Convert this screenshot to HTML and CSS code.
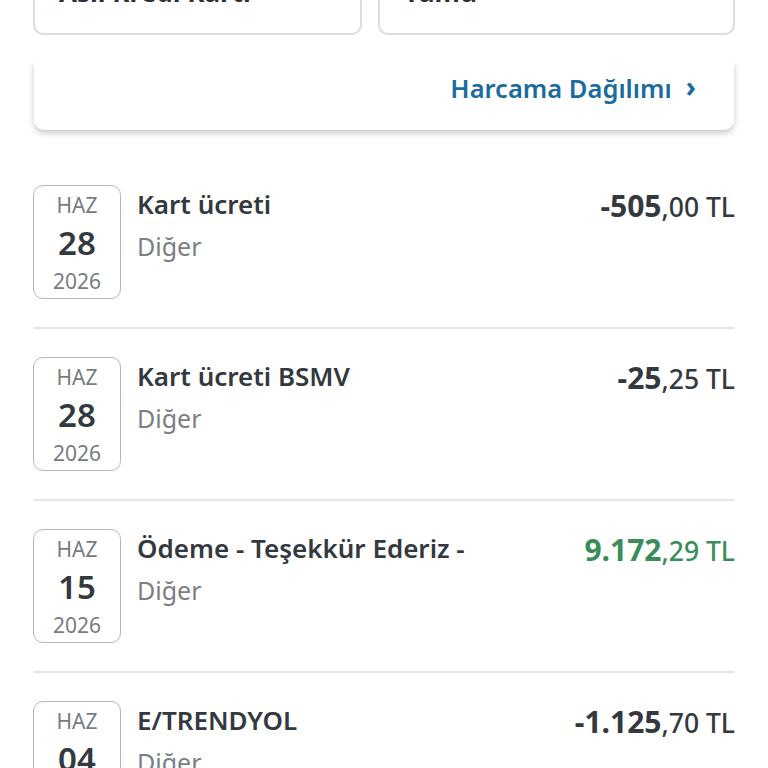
FILE: index.html
```html
<!DOCTYPE html>
<html lang="tr">
<head>
    <meta charset="UTF-8">
    <title>Kart Hareketleri</title>
    <meta name="viewport" content="width=device-width,initial-scale=1.0">
    <link rel="stylesheet" href="styles.css">
</head>
<body>
    <div class="filters">
        <div class="filter">Asıl Kredi Kartı</div>
        <div class="filter">Tümü</div>
    </div>

    <div class="summary">
        <a href="#" class="summary_link">Harcama Dağılımı <span class="chev">&#8250;</span></a>
    </div>

    <ul class="tx_list">
        <li class="tx">
            <div class="date"><span class="mon">HAZ</span><span class="day">28</span><span class="year">2026</span></div>
            <div class="info"><div class="title">Kart ücreti</div><div class="cat">Diğer</div></div>
            <div class="amount"><b>-505</b>,00 TL</div>
        </li>
        <li class="tx">
            <div class="date"><span class="mon">HAZ</span><span class="day">28</span><span class="year">2026</span></div>
            <div class="info"><div class="title">Kart ücreti BSMV</div><div class="cat">Diğer</div></div>
            <div class="amount"><b>-25</b>,25 TL</div>
        </li>
        <li class="tx">
            <div class="date"><span class="mon">HAZ</span><span class="day">15</span><span class="year">2026</span></div>
            <div class="info"><div class="title">Ödeme - Teşekkür Ederiz -</div><div class="cat">Diğer</div></div>
            <div class="amount plus"><b>9.172</b>,29 TL</div>
        </li>
        <li class="tx">
            <div class="date"><span class="mon">HAZ</span><span class="day">04</span><span class="year">2026</span></div>
            <div class="info"><div class="title">E/TRENDYOL</div><div class="cat">Diğer</div></div>
            <div class="amount"><b>-1.125</b>,70 TL</div>
        </li>
    </ul>
</body>
</html>
```

FILE: styles.css
```css
body{
    margin:0;
    background:#fff;
    font-family:"Noto Sans",Lato,sans-serif;
    color:#333a40;
    overflow:hidden;
}
.filters{
    display:grid;
    grid-template-columns:329px 1fr;
    gap:16px;
    padding:0 33px;
    margin-top:-33px;
}
.filter{
    height:68px;
    box-sizing:border-box;
    border:2px solid #dcdcdc;
    border-radius:10px;
    padding:9px 24px 0;
    font-size:26px;
    font-weight:700;
    color:#2b3137;
    line-height:28px;
}
.summary{
    margin:27px 34px 0;
    height:68px;
    box-sizing:border-box;
    background:#fff;
    border-radius:0 0 10px 10px;
    box-shadow:0 3px 6px rgba(0,0,0,.22);
    clip-path:inset(0 -20px -20px -20px);
    display:flex;
    justify-content:flex-end;
    align-items:center;
    padding:0 38px 16px 0;
}
.summary_link{
    color:#1b6c9e;
    text-decoration:none;
    font-size:25.5px;
    font-weight:600;
    display:flex;
    align-items:center;
    gap:14px;
}
.chev{
    font-size:28px;
    font-weight:700;
    position:relative;
    top:-2px;
}
.tx_list{
    list-style:none;
    margin:26px 0 0;
    padding:0 33px;
}
.tx{
    display:flex;
    align-items:flex-start;
    padding:28px 0;
    border-bottom:2px solid #e6e9ec;
}
.tx:first-child{
    padding-top:29px;
}
.date{
    width:88px;
    height:114px;
    box-sizing:border-box;
    border:1px solid #b5b8bb;
    border-radius:10px;
    display:flex;
    flex-direction:column;
    align-items:center;
    justify-content:center;
    gap:6px;
    flex-shrink:0;
    padding-top:2px;
}
.mon,.year{
    font-size:21px;
    color:#777c80;
    line-height:30px;
}
.day{
    font-size:33px;
    font-weight:600;
    color:#33393e;
    line-height:34px;
}
.info{
    flex:1;
    padding-left:16px;
}
.title{
    font-size:26px;
    font-weight:600;
    color:#33393e;
    line-height:30px;
    margin-top:4px;
}
.cat{
    font-size:25px;
    color:#7a7f84;
    margin-top:10px;
}
.amount{
    font-size:26.5px;
    font-weight:500;
    color:#33393e;
    margin-top:0;
    white-space:nowrap;
}
.amount b{
    font-size:30px;
    font-weight:700;
}
.amount.plus{
    color:#3a8d58;
}
```
